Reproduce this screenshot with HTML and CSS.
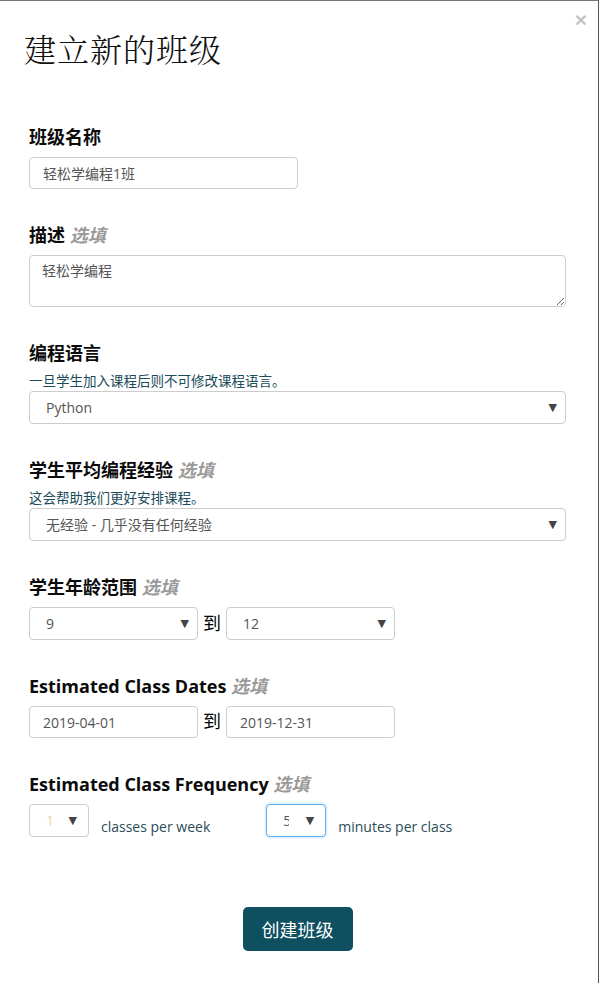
FILE: index.html
```html
<!DOCTYPE html>
<html lang="zh">
<head>
<meta charset="utf-8">
<title>建立新的班级</title>
<link rel="stylesheet" href="styles.css">
</head>
<body>
<div class="modal">
  <button class="close" type="button">×</button>
  <div class="modal-header">
    <h1 class="title">建立新的班级</h1>
  </div>
  <form class="modal-body">
    <div class="group first">
      <label class="label">班级名称</label>
      <input class="field name-field" type="text" value="轻松学编程1班">
    </div>

    <div class="group">
      <label class="label">描述 <em class="optional">选填</em></label>
      <textarea class="field textarea">轻松学编程</textarea>
    </div>

    <div class="group">
      <label class="label">编程语言</label>
      <div class="help">一旦学生加入课程后则不可修改课程语言。</div>
      <div class="select-wrap full">
        <select class="field select"><option>Python</option></select>
        <span class="caret">▼</span>
      </div>
    </div>

    <div class="group">
      <label class="label">学生平均编程经验 <em class="optional">选填</em></label>
      <div class="help">这会帮助我们更好安排课程。</div>
      <div class="select-wrap full">
        <select class="field select"><option>无经验 - 几乎没有任何经验</option></select>
        <span class="caret">▼</span>
      </div>
    </div>

    <div class="group">
      <label class="label">学生年龄范围 <em class="optional">选填</em></label>
      <div class="range">
        <div class="select-wrap half">
          <select class="field select"><option>9</option></select>
          <span class="caret">▼</span>
        </div>
        <span class="to">到</span>
        <div class="select-wrap half">
          <select class="field select"><option>12</option></select>
          <span class="caret">▼</span>
        </div>
      </div>
    </div>

    <div class="group">
      <label class="label">Estimated Class Dates <em class="optional">选填</em></label>
      <div class="range">
        <input class="field date-field" type="text" value="2019-04-01">
        <span class="to">到</span>
        <input class="field date-field" type="text" value="2019-12-31">
      </div>
    </div>

    <div class="group">
      <label class="label">Estimated Class Frequency <em class="optional">选填</em></label>
      <div class="freq">
        <div class="select-wrap tiny">
          <select class="field select faint"><option>1</option></select>
          <span class="caret cover">▼</span>
        </div>
        <span class="unit">classes per week</span>
        <div class="select-wrap tiny second">
          <select class="field select focused"><option>5</option></select>
          <span class="caret cover wide">▼</span>
        </div>
        <span class="unit">minutes per class</span>
      </div>
    </div>

    <div class="actions">
      <button class="btn-primary" type="button">创建班级</button>
    </div>
  </form>
</div>
</body>
</html>
```

FILE: styles.css
```css
html, body {
  margin: 0;
  padding: 0;
  background: #fff;
}

body {
  font-family: "Open Sans", "Noto Sans CJK SC", sans-serif;
  color: #111;
}

.modal {
  position: relative;
  height: 983px;
  box-sizing: border-box;
  border-top: 1px solid #777;
  border-right: 1px solid #555;
  background: #fff;
}

.close {
  position: absolute;
  top: 8px;
  right: 11px;
  border: 0;
  background: transparent;
  padding: 0;
  font-family: "Liberation Sans", sans-serif;
  font-size: 21px;
  font-weight: 700;
  line-height: 21px;
  color: #c4c4c4;
}

.modal-header {
  padding: 28px 32px 0 24px;
}

.title {
  margin: 0;
  font-family: "Noto Serif CJK SC", "Noto Sans CJK SC", serif;
  font-weight: 300;
  font-size: 32px;
  line-height: 38px;
  letter-spacing: 1px;
  color: #111;
}

.modal-body {
  padding: 0 32px 0 29px;
  margin-top: 58px;
}

.group {
  margin-top: 34px;
}

.group.first {
  margin-top: 0;
}

.label {
  display: block;
  font-family: "Open Sans", "Noto Sans CJK SC", sans-serif;
  font-weight: 700;
  font-size: 18px;
  line-height: 24px;
  color: #0b0b0b;
  margin-bottom: 8px;
}

.optional {
  font-style: italic;
  color: #9a9a9a;
  font-weight: 700;
}

.help {
  font-family: "Open Sans", "Noto Sans CJK SC", sans-serif;
  font-size: 13.5px;
  line-height: 18px;
  color: #1a4b5b;
  margin-top: -1px;
  margin-bottom: 1px;
}

.field {
  display: block;
  box-sizing: border-box;
  border: 1px solid #ccc;
  border-radius: 4px;
  background: #fff;
  font-family: "Open Sans", "Noto Sans CJK SC", sans-serif;
  font-size: 14px;
  color: #555;
  margin: 0;
  outline: none;
}

.name-field {
  width: 269px;
  height: 32px;
  padding: 0 13px;
}

.textarea {
  width: 100%;
  height: 52px;
  padding: 5px 12px;
  line-height: 20px;
  resize: vertical;
}

.select-wrap {
  position: relative;
}

.select {
  -webkit-appearance: none;
  appearance: none;
  width: 100%;
  height: 33px;
  padding: 0 16px;
  font-size: 14px;
}

.caret {
  position: absolute;
  right: 9px;
  top: 50%;
  transform: translateY(-52%);
  font-family: "DejaVu Sans", sans-serif;
  font-size: 11px;
  line-height: 12px;
  color: #444;
  pointer-events: none;
}

.range {
  display: flex;
  align-items: center;
  gap: 5px;
}

.half {
  width: 169px;
}

.to {
  font-family: "Noto Sans CJK SC", sans-serif;
  font-size: 18px;
  line-height: 24px;
  color: #000;
  margin-top: -4px;
}

.date-field {
  width: 169px;
  height: 32px;
  padding: 0 13px;
}

.freq {
  display: flex;
  align-items: flex-end;
}

.tiny {
  width: 60px;
}

.tiny .select {
  height: 33px;
  padding: 0 16px;
}

.tiny .caret.cover {
  right: 12px;
  background: #fff;
  padding-left: 4px;
}

.tiny .caret.cover.wide {
  padding-left: 17px;
}

.faint {
  color: #e9d9a6;
}

.focused {
  border-color: #66afe9;
  box-shadow: 0 0 3px rgba(102, 175, 233, 0.6);
}

.tiny.second {
  margin-left: 56px;
}

.unit {
  font-family: "Open Sans", sans-serif;
  font-size: 14px;
  line-height: 20px;
  color: #2a4d5a;
  margin-left: 12px;
}

.actions {
  display: flex;
  justify-content: center;
  margin-top: 70px;
}

.btn-primary {
  height: 44px;
  padding: 0 19px;
  border: 0;
  border-radius: 5px;
  background: #0e4f60;
  color: #fff;
  font-family: "Noto Sans CJK SC", sans-serif;
  font-size: 18px;
  line-height: 44px;
}
```
